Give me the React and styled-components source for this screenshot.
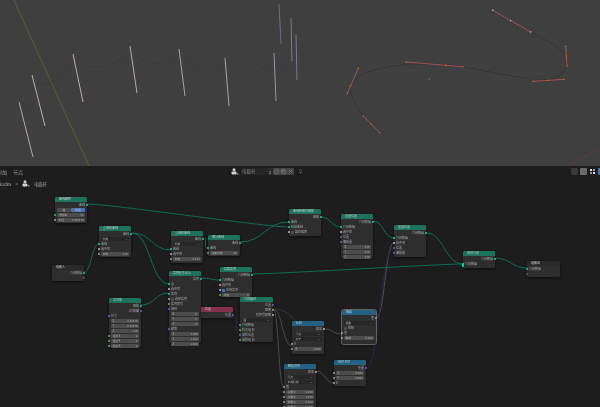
import React from "react";
import styled, { createGlobalStyle } from "styled-components";
import { Pin, Shield, Copy, X } from "lucide-react";

const FONT = `"Noto Sans CJK SC", "Noto Sans", sans-serif`;
const CANVAS_TOP = 190;

const GlobalStyle = createGlobalStyle`
  html, body {
    margin: 0;
    padding: 0;
    background: #1d1d1d;
    overflow: hidden;
  }
`;

const PAGE = styled.div`
  width: 600px;
  height: 407px;
  display: flex;
  flex-direction: column;
  font-family: ${FONT};
  overflow: hidden;
  filter: blur(0.3px);
`;

const VIEWPORT = styled.div`
  height: 166px;
  flex: none;
  background: #3f3f3f;
`;

const EDITOR = styled.div`
  flex: 1;
  display: flex;
  flex-direction: column;
  background: #1d1d1d;
  min-height: 0;
`;

const TOOLBAR = styled.div`
  height: 11px;
  flex: none;
  display: flex;
  align-items: center;
  color: #b4b4b4;
  font-size: 5px;
  line-height: 1;
`;

const MENU = styled.div`
  width: 231px;
  flex: none;
  display: flex;
  align-items: center;
  margin-left: -3px;
  padding-right: 3px;
  box-sizing: content-box;
`;

const GROUP = styled.div`
  display: flex;
  align-items: center;
  gap: ${(p) => p.$gap || 0}px;
  margin-left: ${(p) => (p.$end ? "auto" : "0")};
  margin-right: ${(p) => (p.$end ? "-2px" : "0")};
`;

const MENUITEM = styled.span`
  color: #a0a0a0;
  margin-right: 6px;
`;

const TREEFIELD = styled.div`
  width: 25px;
  height: 7px;
  margin-left: 2px;
  background: #242424;
  border-radius: 1px;
  color: #858585;
  font-size: 4.5px;
  line-height: 7px;
  padding-left: 1px;
`;

const TOOLBTN = styled.div`
  width: ${(p) => p.$w || 7}px;
  height: 7px;
  display: flex;
  align-items: center;
  justify-content: center;
  background: ${(p) => p.$bg || "#3d3d3d"};
  border-radius: 1px;
  color: #c0c0c0;
  font-size: 4px;
`;

const BREADCRUMB = styled.div`
  height: 13px;
  flex: none;
  display: flex;
  align-items: center;
  gap: 4px;
  color: #a0a0a0;
  font-size: 4.5px;
  margin-left: -2px;
`;

const CANVAS = styled.div`
  flex: 1;
  position: relative;
  overflow: hidden;
`;

const WIRES = styled.svg`
  position: absolute;
  inset: 0;
  width: 600px;
  height: 217px;
`;

const NODE = styled.div`
  position: absolute;
  left: ${(p) => p.$x}px;
  top: ${(p) => p.$y - CANVAS_TOP}px;
  width: ${(p) => p.$w}px;
  height: ${(p) => p.$h}px;
  background: #2e2e2e;
  border-radius: 1.5px;
  box-shadow: 0 1px 3px rgba(0, 0, 0, 0.6);
  outline: ${(p) => (p.$selected ? "0.5px solid #626262" : "none")};
  display: flex;
  flex-direction: column;
`;

const NODEHEAD = styled.div`
  height: 5px;
  flex: none;
  background: ${(p) => p.$color};
  border-radius: 1.5px 1.5px 0 0;
  color: #c4d0cc;
  font-size: 3px;
  line-height: 5px;
  padding-left: 4px;
  white-space: nowrap;
  overflow: hidden;
`;

const NODEBODY = styled.div`
  display: flex;
  flex-direction: column;
  padding-top: 0.5px;
`;

const ROW = styled.div`
  position: relative;
  height: 5px;
  flex: none;
  display: flex;
  align-items: center;
  justify-content: ${(p) => (p.$right ? "flex-end" : "flex-start")};
  padding: 0 2px;
  color: #a8a8a8;
  font-size: 3px;
  line-height: 5px;
  white-space: nowrap;
`;

const PILL = styled.div`
  flex: 1;
  height: 4px;
  display: flex;
  align-items: center;
  justify-content: space-between;
  padding: 0 1.5px;
  background: ${(p) => (p.$dark ? "#262626" : "#4c4c4c")};
  border-radius: 1px;
  color: #b0b0b0;
  font-size: 2.8px;
  line-height: 4px;
  overflow: hidden;
`;

const SPLIT = styled.div`
  flex: 1;
  height: 4px;
  display: flex;
  gap: 0.5px;
`;

const SPLITBTN = styled.div`
  flex: 1;
  background: ${(p) => (p.$active ? "#4772b3" : "#4c4c4c")};
  border-radius: 1px;
  color: #d0d0d0;
  font-size: 2.8px;
  line-height: 4px;
  text-align: center;
`;

const CHECK = styled.span`
  width: 3px;
  height: 3px;
  margin-right: 1px;
  flex: none;
  border-radius: 0.5px;
  background: ${(p) => (p.$on ? "#4772b3" : "#4c4c4c")};
`;

const SOCKET = styled.span`
  position: absolute;
  top: 1.25px;
  ${(p) => (p.$side === "out" ? "right" : "left")}: -1.25px;
  width: 2.5px;
  height: ${(p) => p.$tall || 2.5}px;
  border-radius: ${(p) => (p.$tall ? "0.5px" : "50%")};
  background: ${(p) => p.$color};
`;

const TEAL = "#1d725e";
const BLUE = "#246283";
const PINK = "#83314a";
const DARKHEAD = "#2a2a2a";

const G = "#00d6a3";
const F = "#a1a1a1";
const V = "#6363c7";
const B = "#cca6d6";
const I = "#5fb35f";

const out = (label, s = G) => ({ kind: "out", label, s });
const inp = (label, s = G) => ({ kind: "in", label, s });
const field = (label, value, s) => ({ kind: "field", label, value, s });
const select = (label) => ({ kind: "select", label });
const check = (label, on, s) => ({ kind: "check", label, on, s });
const xyz = (a, b, c) => [field("X", a), field("Y", b), field("Z", c)];

const NODES = [
  { x: 55, y: 197, w: 32, h: 26, color: TEAL, title: "曲线圆环", rows: [
    out("曲线"),
    { kind: "split", items: ["点", "半径"], active: 1 },
    field("分辨率", "32", I),
    field("半径", "0.0050 m", F),
  ] },
  { x: 99, y: 226, w: 32, h: 31, color: TEAL, title: "重采样曲线", rows: [
    out("曲线"), select("长度"), inp("曲线"), inp("选中项", B), field("长度", "1 m", F),
  ] },
  { x: 171, y: 231, w: 32, h: 32, color: TEAL, title: "重采样曲线", rows: [
    out("曲线"), select("长度"), inp("曲线"), inp("选中项", B), field("长度", "0.5 m", F),
  ] },
  { x: 169, y: 271, w: 32, h: 72, color: TEAL, title: "实例化于点上", rows: [
    out("实例"), inp("点"), inp("选中项", B), inp("实例"),
    check("选择实例", false, B), inp("实例索引", I), inp("旋转", V),
    ...xyz("0°", "0°", "0°"), inp("缩放", V), ...xyz("1.000", "1.000", "1.000"),
  ] },
  { x: 52, y: 265, w: 32, h: 16, color: DARKHEAD, title: "组输入", rows: [
    out("几何数据"), { kind: "out", label: "", s: "#555555" },
  ] },
  { x: 109, y: 298, w: 32, h: 49, color: TEAL, title: "立方体", rows: [
    out("网格"), out("UV贴图", V), inp("尺寸", V),
    ...xyz("0.010 m", "0.010 m", "1 m"),
    field("顶点 X", "2", I), field("顶点 Y", "2", I), field("顶点 Z", "2", I),
  ] },
  { x: 201, y: 307, w: 32, h: 11, color: PINK, title: "位置", rows: [out("位置", V)] },
  { x: 220, y: 267, w: 32, h: 30, color: TEAL, title: "实现实例", rows: [
    out("几何数据"), inp("几何数据"), inp("选中项", B), check("应用实例", true, B), field("深度", "0", I),
  ] },
  { x: 240, y: 297, w: 33, h: 45, color: TEAL, title: "几何接近", rows: [
    out("位置", V), out("距离", F), out("有符号距离", B), select("面"),
    inp("几何数据"), inp("样本组 ID", I), inp("采样位置", V), inp("采样组 ID", I),
  ] },
  { x: 208, y: 235, w: 32, h: 21, color: TEAL, title: "细分曲线", rows: [
    out("曲线"), inp("曲线"), field("切割次数", "10", I),
  ] },
  { x: 289, y: 209, w: 32, h: 27, color: TEAL, title: "曲线转换为网格", rows: [
    out("网格"), inp("曲线"), inp("轮廓曲线"), check("填充端面", false, B),
  ] },
  { x: 341, y: 214, w: 32, h: 44, color: TEAL, title: "设置位置", rows: [
    out("几何数据"), inp("几何数据"), inp("选中项", B), inp("位置", V), inp("偏移量", V),
    ...xyz("0 m", "0 m", "0 m"),
  ] },
  { x: 394, y: 225, w: 32, h: 32, color: TEAL, title: "设置位置", rows: [
    out("几何数据"), inp("几何数据"), inp("选中项", B), inp("位置", V), inp("偏移量", V),
  ] },
  { x: 463, y: 251, w: 32, h: 17, color: TEAL, title: "合并几何", rows: [
    out("几何数据"), { kind: "in", label: "几何数据", s: G, tall: 4.5 },
  ] },
  { x: 527, y: 261, w: 33, h: 16, color: DARKHEAD, title: "组输出", rows: [
    inp("几何数据"), { kind: "in", label: "", s: "#555555" },
  ] },
  { x: 292, y: 321, w: 32, h: 33, color: BLUE, title: "比较", rows: [
    out("结果", B), select("浮点"), select("大于"), inp("A", F), field("B", "0.000", F),
  ] },
  { x: 342, y: 310, w: 34, h: 34, color: BLUE, title: "相乘", selected: true, rows: [
    out("值", F), select("相乘"), check("钳制", false), inp("值", F), field("乘数", "0.000", F),
  ] },
  { x: 284, y: 364, w: 32, h: 60, color: BLUE, title: "映射范围", rows: [
    out("结果", F), select("浮点"), select("平滑阶梯"), inp("值", F),
    field("从最小", "0.000", F), field("从最大", "1.000", F), field("到最小", "0.000", F), field("到最大", "1.000", F),
  ] },
  { x: 334, y: 360, w: 32, h: 26, color: BLUE, title: "合并 XYZ", rows: [
    out("矢量", V), field("X", "0.000", F), field("Y", "0.000", F), inp("Z", F),
  ] },
];

const GEO = "#0d6e58";

// page coordinates: [from x, from y, to x, to y, colour, width]
const WIRELIST = [
  [87, 204, 289, 227, GEO, 1],
  [132, 233, 171, 250, GEO, 1],
  [132, 233, 169, 284, GEO, 1],
  [84, 272, 99, 244, GEO, 1],
  [203, 238, 208, 248, GEO, 1],
  [240, 242, 289, 222, GEO, 1],
  [321, 217, 341, 227, GEO, 1],
  [373, 221, 394, 238, GEO, 1],
  [426, 233, 463, 264, GEO, 1],
  [495, 258, 527, 268, GEO, 1],
  [201, 278, 220, 280, GEO, 1],
  [252, 274, 463, 264, GEO, 1],
  [141, 305, 169, 293, GEO, 1],
  [233, 315, 240, 334, "#2b2b50", 0.8],
  [273, 309, 292, 346, "#5c5c5c", 0.7],
  [273, 309, 284, 387, "#5c5c5c", 0.7],
  [273, 309, 320, 335, "#3f3f3f", 0.7],
  [324, 329, 342, 334, "#5c5c5c", 0.7],
  [316, 371, 334, 383, "#5c5c5c", 0.7],
  [376, 318, 394, 243, "#5c5c62", 0.8],
  [366, 368, 394, 248, "#2b2b50", 0.8],
];

const wirePath = ([x1, y1, x2, y2]) => {
  const d = Math.min(Math.max(Math.abs(x2 - x1) * 0.5, 6), 24);
  return `M${x1} ${y1}C${x1 + d} ${y1} ${x2 - d} ${y2} ${x2} ${y2}`;
};

const POLES = [
  [19, 102, 33, 157, "#bca69b"],
  [32, 75, 45, 126, "#c2ac9f"],
  [73, 54, 83, 102, "#c2ac9f"],
  [130, 46, 137, 93, "#baa9a2"],
  [179, 49, 185, 96, "#aaa4a2"],
  [225, 58, 229, 106, "#a6a6ac"],
  [274, 53, 276, 101, "#9696a6"],
  [279, 4, 281, 44, "#6f7084"],
  [291, 18, 292, 61, "#7c7d90"],
  [296, 35, 297, 80, "#7c7d90"],
];

const SAGS = [
  "M21 106Q28 115 33 103",
  "M34 83Q50 90 71 67",
  "M75 62Q103 76 130 53",
  "M135 55Q160 72 178 57",
  "M182 57Q207 84 223 68",
  "M230 67Q250 83 273 60",
  "M277 67Q285 70 290 55",
  "M281 24Q285 30 290 24",
];

const HANDLES = [
  { d: [492.7, 10.3, 530.7, 32], dots: [[492.7, 10.3], [510.7, 20.7], [530.7, 32]], dot: "#d8d8d8" },
  { d: [565.7, 46.3, 567, 66], dots: [[565.7, 46.3], [566.4, 56], [567, 66]], dot: "#d8701c" },
  { d: [533, 81.3, 564, 79.3], dots: [[533, 81.3], [548.5, 80.3], [564, 79.3]], dot: "#d8701c" },
  { d: [406, 62, 462.7, 66.7], dots: [[406, 62], [446, 65], [462.7, 66.7]], dot: "#d8701c" },
  { d: [358.3, 68.3, 347.3, 93.3], dots: [[358.3, 68.3], [350.3, 86], [347.3, 93.3]], dot: "#d8701c" },
  { d: [363.3, 116, 379.7, 132.7], dots: [[363.3, 116], [371, 124], [379.7, 132.7]], dot: "#d8701c" },
];

const Scene = () => (
  <svg width="600" height="166" viewBox="0 0 600 166" style={{ display: "block" }}>
    <line x1="14" y1="0" x2="89" y2="166" stroke="#5d6f35" strokeWidth="0.7" />
    <line x1="566.7" y1="166" x2="600" y2="149" stroke="#6b3f45" strokeWidth="0.7" />
    {SAGS.map((d, i) => (
      <path key={i} d={d} fill="none" stroke="#363636" strokeWidth="0.5" />
    ))}
    {POLES.map(([x1, y1, x2, y2, c], i) => (
      <line key={i} x1={x1} y1={y1} x2={x2} y2={y2} stroke={c} strokeWidth="1" />
    ))}
    <path
      d="M530.7 32C550 42 566 50 566.5 60C567 72 560 78 550 79.5C540 81 520 78 462.7 66.7C440 63 420 64 410 64.5C380 66 352 74 350 88C350 96 356 106 363.3 116"
      fill="none"
      stroke="#2c2c2c"
      strokeWidth="0.6"
    />
    {HANDLES.map((h, i) => (
      <g key={i}>
        <line x1={h.d[0]} y1={h.d[1]} x2={h.d[2]} y2={h.d[3]} stroke="#a5525a" strokeWidth="0.9" />
        {h.dots.map(([cx, cy], j) => (
          <rect key={j} x={cx - 0.6} y={cy - 0.6} width="1.2" height="1.2" fill={h.dot} />
        ))}
      </g>
    ))}
    <rect x="428.8" y="78.4" width="1" height="1.4" fill="#c9701c" />
  </svg>
);

const GroupIcon = () => (
  <svg width="8" height="7" viewBox="0 0 8 7">
    <circle cx="3" cy="1.7" r="1.5" fill="#d0d0d0" />
    <rect x="0.5" y="3.6" width="5" height="2.8" rx="0.8" fill="#d0d0d0" />
    <rect x="6" y="5" width="1.5" height="1.5" fill="#8a8a8a" />
  </svg>
);

const SnapIcon = () => (
  <svg width="7" height="7" viewBox="0 0 7 7">
    <rect x="1" y="1" width="2" height="2" fill="#e0e0e0" />
    <rect x="4" y="1" width="2" height="2" fill="#9a9a9a" />
    <rect x="1" y="4" width="2" height="2" fill="#9a9a9a" />
    <rect x="4" y="4" width="2" height="2" fill="#e0e0e0" />
  </svg>
);

const renderRow = (r, i) => {
  const sock = r.s ? (
    <SOCKET $side={r.kind === "out" ? "out" : "in"} $color={r.s} $tall={r.tall} />
  ) : null;
  if (r.kind === "out") {
    return (
      <ROW key={i} $right>
        {r.label}
        {sock}
      </ROW>
    );
  }
  if (r.kind === "in") {
    return (
      <ROW key={i}>
        {r.label}
        {sock}
      </ROW>
    );
  }
  if (r.kind === "field") {
    return (
      <ROW key={i}>
        <PILL>
          <span>{r.label}</span>
          <span>{r.value}</span>
        </PILL>
        {sock}
      </ROW>
    );
  }
  if (r.kind === "select") {
    return (
      <ROW key={i}>
        <PILL $dark>
          <span>{r.label}</span>
          <span>⌄</span>
        </PILL>
      </ROW>
    );
  }
  if (r.kind === "check") {
    return (
      <ROW key={i}>
        <CHECK $on={r.on} />
        {r.label}
        {sock}
      </ROW>
    );
  }
  return (
    <ROW key={i}>
      <SPLIT>
        {r.items.map((t, j) => (
          <SPLITBTN key={t} $active={j === r.active}>
            {t}
          </SPLITBTN>
        ))}
      </SPLIT>
    </ROW>
  );
};

const App = () => {
  return (
    <PAGE>
      <GlobalStyle />
      <VIEWPORT>
        <Scene />
      </VIEWPORT>
      <EDITOR>
        <TOOLBAR>
          <MENU>
            <MENUITEM>添加</MENUITEM>
            <MENUITEM>节点</MENUITEM>
          </MENU>
          <GROUP>
            <GroupIcon />
            <TREEFIELD>电缆杆</TREEFIELD>
            <TOOLBTN $bg="#2a2a2a" $w={6}>2</TOOLBTN>
            <TOOLBTN $bg="#474747"><Shield size={5} strokeWidth={1.5} /></TOOLBTN>
            <TOOLBTN $bg="#474747"><Copy size={5} strokeWidth={1.5} /></TOOLBTN>
            <TOOLBTN $bg="#474747"><X size={5} strokeWidth={1.5} /></TOOLBTN>
            <Pin size={5} strokeWidth={1.5} color="#8a8a8a" style={{ marginLeft: 4 }} />
          </GROUP>
          <GROUP $end $gap={2}>
            <TOOLBTN $bg="#3a3a3a" />
            <TOOLBTN $bg="#6a6a6a" />
            <SnapIcon />
            <TOOLBTN $bg="#4772b3" $w={4} />
          </GROUP>
        </TOOLBAR>
        <BREADCRUMB>
          <span>Nodes</span>
          <span>&gt;</span>
          <GroupIcon />
          <span>电缆杆</span>
        </BREADCRUMB>
        <CANVAS>
          <WIRES viewBox={`0 ${CANVAS_TOP} 600 217`}>
            {WIRELIST.map((w, i) => (
              <path key={i} d={wirePath(w)} fill="none" stroke={w[4]} strokeWidth={w[5]} />
            ))}
          </WIRES>
          {NODES.map((n, i) => (
            <NODE key={i} $x={n.x} $y={n.y} $w={n.w} $h={n.h} $selected={n.selected}>
              <NODEHEAD $color={n.color}>{n.title}</NODEHEAD>
              <NODEBODY>{n.rows.map(renderRow)}</NODEBODY>
            </NODE>
          ))}
        </CANVAS>
      </EDITOR>
    </PAGE>
  );
};

export default App;
